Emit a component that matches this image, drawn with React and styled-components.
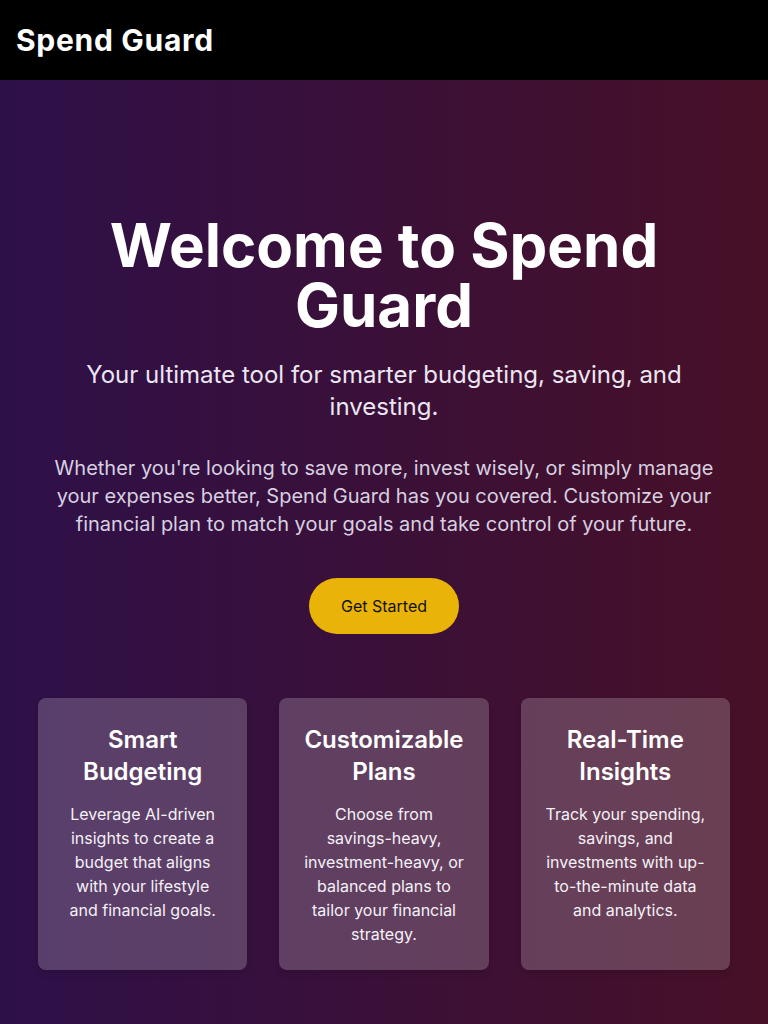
import React from "react";
import styled, { createGlobalStyle } from "styled-components";

const GlobalStyle = createGlobalStyle`
  * { box-sizing: border-box; }
  html, body { margin: 0; padding: 0; }
  body {
    font-family: Inter, "Noto Sans", "Liberation Sans", sans-serif;
    background: #000;
    -webkit-font-smoothing: antialiased;
  }
`;

const Page = styled.div`
  min-height: 1024px;
  display: flex;
  flex-direction: column;
  background: linear-gradient(to right, #2e1049, #471027);
`;

const Header = styled.header`
  height: 80px;
  background: #000;
  display: flex;
  align-items: center;
  padding: 0 16px;
`;

const Brand = styled.h1`
  margin: 0;
  color: #fff;
  font-size: 30px;
  font-weight: 700;
  line-height: 36px;
  letter-spacing: 0.7px;
`;

const Main = styled.main`
  flex: 1;
  display: flex;
  flex-direction: column;
  align-items: center;
  padding: 135px 38px 55px;
  text-align: center;
`;

const Title = styled.h2`
  margin: 0;
  color: #fff;
  font-size: 60px;
  line-height: 60px;
  font-weight: 700;
  max-width: 600px;
`;

const Subtitle = styled.p`
  margin: 24px 0 0;
  color: #ece6f2;
  font-size: 24px;
  line-height: 32px;
  max-width: 620px;
`;

const Lead = styled.p`
  margin: 31px 0 0;
  color: #d8d0e0;
  font-size: 20px;
  line-height: 28px;
  max-width: 672px;
`;

const CTA = styled.button`
  margin-top: 40px;
  background: #eab308;
  color: #111;
  border: none;
  border-radius: 9999px;
  padding: 16px 32px;
  font-family: inherit;
  font-size: 16px;
  line-height: 24px;
  cursor: pointer;
`;

const Features = styled.section`
  margin-top: 64px;
  width: 100%;
  display: grid;
  grid-template-columns: repeat(3, 1fr);
  gap: 32px;
`;

const Card = styled.article`
  background: rgba(255, 255, 255, 0.2);
  border-radius: 8px;
  padding: 26px 24px 24px;
  box-shadow: 0 4px 6px rgba(0, 0, 0, 0.1);
  display: flex;
  flex-direction: column;
  align-items: center;
`;

const CardTitle = styled.h3`
  margin: 0;
  color: #fff;
  font-size: 24px;
  line-height: 32px;
  font-weight: 600;
`;

const CardText = styled.p`
  margin: 14px 0 0;
  color: #f5f1f7;
  font-size: 16px;
  line-height: 24px;
`;

const features = [
  {
    title: "Smart Budgeting",
    text: "Leverage AI-driven insights to create a budget that aligns with your lifestyle and financial goals.",
  },
  {
    title: "Customizable Plans",
    text: "Choose from savings-heavy, investment-heavy, or balanced plans to tailor your financial strategy.",
  },
  {
    title: "Real-Time Insights",
    text: "Track your spending, savings, and investments with up-to-the-minute data and analytics.",
  },
];

export default function App() {
  return (
    <>
      <GlobalStyle />
      <Page>
        <Header>
          <Brand>Spend Guard</Brand>
        </Header>
        <Main>
          <Title>Welcome to Spend Guard</Title>
          <Subtitle>Your ultimate tool for smarter budgeting, saving, and investing.</Subtitle>
          <Lead>
            Whether you're looking to save more, invest wisely, or simply manage your expenses
            better, Spend Guard has you covered. Customize your financial plan to match your goals
            and take control of your future.
          </Lead>
          <CTA>Get Started</CTA>
          <Features>
            {features.map((f) => (
              <Card key={f.title}>
                <CardTitle>{f.title}</CardTitle>
                <CardText>{f.text}</CardText>
              </Card>
            ))}
          </Features>
        </Main>
      </Page>
    </>
  );
}
